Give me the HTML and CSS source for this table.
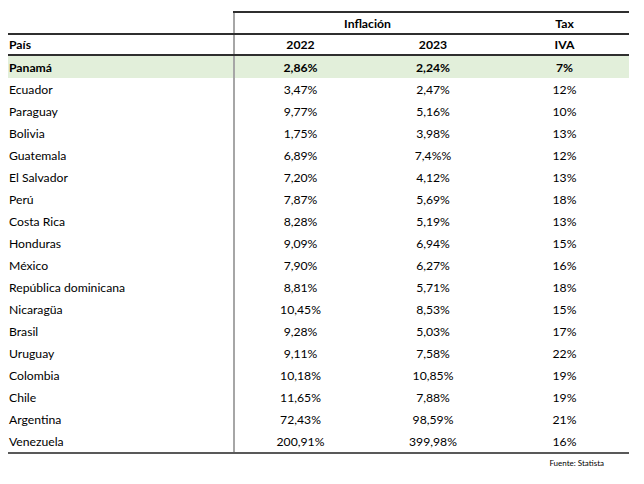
FILE: index.html
```html
<!DOCTYPE html>
<html lang="es">
<head>
<meta charset="utf-8">
<link rel="stylesheet" href="styles.css">
</head>
<body>
<table class="tbl">
  <colgroup>
    <col class="c-pais"><col class="c-y1"><col class="c-y2"><col class="c-tax">
  </colgroup>
  <thead>
    <tr class="h1">
      <th class="blank"></th>
      <th class="sep top" colspan="2">Inflación</th>
      <th class="top">Tax</th>
    </tr>
    <tr class="h2">
      <th class="left">País</th>
      <th class="sep">2022</th>
      <th>2023</th>
      <th>IVA</th>
    </tr>
  </thead>
  <tbody>
    <tr class="hl"><td class="left">Panamá</td><td class="sep">2,86%</td><td>2,24%</td><td>7%</td></tr>
    <tr><td class="left">Ecuador</td><td class="sep">3,47%</td><td>2,47%</td><td>12%</td></tr>
    <tr><td class="left">Paraguay</td><td class="sep">9,77%</td><td>5,16%</td><td>10%</td></tr>
    <tr><td class="left">Bolivia</td><td class="sep">1,75%</td><td>3,98%</td><td>13%</td></tr>
    <tr><td class="left">Guatemala</td><td class="sep">6,89%</td><td>7,4%%</td><td>12%</td></tr>
    <tr><td class="left">El Salvador</td><td class="sep">7,20%</td><td>4,12%</td><td>13%</td></tr>
    <tr><td class="left">Perú</td><td class="sep">7,87%</td><td>5,69%</td><td>18%</td></tr>
    <tr><td class="left">Costa Rica</td><td class="sep">8,28%</td><td>5,19%</td><td>13%</td></tr>
    <tr><td class="left">Honduras</td><td class="sep">9,09%</td><td>6,94%</td><td>15%</td></tr>
    <tr><td class="left">México</td><td class="sep">7,90%</td><td>6,27%</td><td>16%</td></tr>
    <tr><td class="left">República dominicana</td><td class="sep">8,81%</td><td>5,71%</td><td>18%</td></tr>
    <tr><td class="left">Nicaragüa</td><td class="sep">10,45%</td><td>8,53%</td><td>15%</td></tr>
    <tr><td class="left">Brasil</td><td class="sep">9,28%</td><td>5,03%</td><td>17%</td></tr>
    <tr><td class="left">Uruguay</td><td class="sep">9,11%</td><td>7,58%</td><td>22%</td></tr>
    <tr><td class="left">Colombia</td><td class="sep">10,18%</td><td>10,85%</td><td>19%</td></tr>
    <tr><td class="left">Chile</td><td class="sep">11,65%</td><td>7,88%</td><td>19%</td></tr>
    <tr><td class="left">Argentina</td><td class="sep">72,43%</td><td>98,59%</td><td>21%</td></tr>
    <tr class="last"><td class="left">Venezuela</td><td class="sep">200,91%</td><td>399,98%</td><td>16%</td></tr>
  </tbody>
</table>
<div class="source">Fuente: Statista</div>
</body>
</html>
```
FILE: styles.css
```css
html, body {
  background: #ffffff;
}
body {
  margin: 0;
  padding: 11px 0 0 8px;
  font-family: Lato, "Open Sans", sans-serif;
  font-size: 12.2px;
  color: #000000;
}
.tbl {
  border-collapse: collapse;
  table-layout: fixed;
  width: 621px;
}
.c-pais { width: 226px; }
.c-y1 { width: 132px; }
.c-y2 { width: 134px; }
.c-tax { width: 129px; }
.tbl th, .tbl td {
  padding: 0;
  text-align: center;
  vertical-align: middle;
  height: 22px;
  white-space: nowrap;
}
.tbl th { font-weight: 700; }
.tbl .left { text-align: left; padding-left: 1px; }
.tbl .sep { border-left: 2px solid #a6a6a6; }
.h1 th { height: 20px; border-bottom: 2px solid #2f2f2f; }
.h1 th.top { border-top: 2px solid #2f2f2f; }
.h2 th { height: 19px; border-bottom: 2px solid #2f2f2f; }
.hl td { background: #e2efda; font-weight: 700; }
.last td { border-bottom: 2px solid #595959; }
.source {
  width: 596px;
  text-align: right;
  font-size: 8px;
  margin-top: 4px;
}
```
